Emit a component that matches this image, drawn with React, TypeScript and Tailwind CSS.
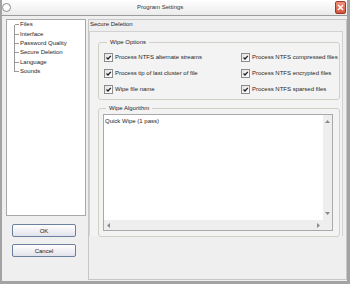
import React from 'react'

const TREE = ['Files', 'Interface', 'Password Quality', 'Secure Deletion', 'Language', 'Sounds']

const LEFT_OPTS = ['Process NTFS alternate streams', 'Process tip of last cluster of file', 'Wipe file name']
const RIGHT_OPTS = ['Process NTFS compressed files', 'Process NTFS encrypted files', 'Process NTFS sparsed files']

function Check({ label }: { label: string }) {
  return (
    <div className="flex items-center h-[16px]">
      <span className="w-[9px] h-[9px] border border-[#8c8c8c] bg-gradient-to-br from-[#e2e2e2] to-white flex items-center justify-center">
        <svg width="7" height="7" viewBox="0 0 7 7">
          <path d="M1.5 3.5 L3 5 L5.8 1.8" stroke="#1a1a1a" strokeWidth="1.2" fill="none" />
        </svg>
      </span>
      <span className="ml-[2px]">{label}</span>
    </div>
  )
}

function Arrow({ dir }: { dir: 'up' | 'down' | 'left' | 'right' }) {
  const d = {
    up: 'M0 3 L2.5 0 L5 3 Z',
    down: 'M0 0 L5 0 L2.5 3 Z',
    left: 'M3 0 L3 5 L0 2.5 Z',
    right: 'M0 0 L3 2.5 L0 5 Z',
  }[dir]
  const vertical = dir === 'up' || dir === 'down'
  return (
    <svg width={vertical ? 5 : 3} height={vertical ? 3 : 5} viewBox={vertical ? '0 0 5 3' : '0 0 3 5'}>
      <path d={d} fill="#8a8a8a" />
    </svg>
  )
}

function Btn({ label }: { label: string }) {
  return (
    <button className="w-[64px] h-[13px] ml-[6px] rounded-[2px] border border-[#6b7f9e] bg-gradient-to-b from-white to-[#e2e2ec] text-[#222] flex items-center justify-center leading-none">
      {label}
    </button>
  )
}

export default function App() {
  return (
    <div
      className="w-[350px] h-[284px] bg-[#efefef] border-l-2 border-r-[3px] border-b-[3px] border-[#a3a3a3] flex flex-col text-[6px] leading-[7px] text-[#1e1e1e]"
      style={{ fontFamily: '"Liberation Sans", Arial, sans-serif' }}
    >
      {/* title bar */}
      <div className="h-[16px] flex items-center border-b border-[#9c9c9c] bg-gradient-to-b from-white to-[#ebebeb]">
        <span className="w-[9px] h-[9px] rounded-full border border-[#8a8a8a] bg-white" />
        <span className="ml-[126px] text-[#333]">Program Settings</span>
        <span className="flex-1" />
        <span className="w-[11px] h-[13px] mr-[1px] rounded-[2px] border border-[#9c3a2a] bg-gradient-to-b from-[#f0907a] to-[#d4533a] flex items-center justify-center">
          <svg width="7" height="7" viewBox="0 0 7 7">
            <path d="M1 1 L6 6 M6 1 L1 6" stroke="white" strokeWidth="1.5" />
          </svg>
        </span>
      </div>

      <div className="flex-1 flex pl-[4px] pt-[3px]">
        {/* left column */}
        <div className="w-[80px] flex flex-col">
          <div className="h-[197px] border border-[#a9a9a9] bg-white flex">
            <div className="ml-[7px] mt-[5px] w-px h-[47px] bg-[#9a9a9a]" />
            <div className="flex flex-col">
              {TREE.map((t) => (
                <div key={t} className="h-[9.4px] flex items-center">
                  <span className="w-[4px] h-px bg-[#9a9a9a]" />
                  <span className="ml-[1px]">{t}</span>
                </div>
              ))}
            </div>
          </div>
          <div className="mt-[8px]">
            <Btn label="OK" />
          </div>
          <div className="mt-[7px]">
            <Btn label="Cancel" />
          </div>
        </div>

        {/* right page */}
        <div className="ml-[2px] w-[259px] h-[261px] border border-[#c6c6c6] flex flex-col">
          <div className="h-[11px] pl-[1px] pt-[1px]">Secure Deletion</div>
          <div className="w-[254px] h-[205px] border-t border-l border-r border-[#d2d2d2] bg-[#f3f3f3] flex flex-col pl-[8px]">
            <fieldset className="w-[242px] mt-[7px] border border-[#d0d0c8] rounded-[3px] pl-[5px] pb-[2px]">
              <legend className="ml-[3px] px-[3px]">Wipe Options</legend>
              <div className="grid grid-cols-[137px_1fr] pt-[3px]">
                <div className="flex flex-col">
                  {LEFT_OPTS.map((o) => (
                    <Check key={o} label={o} />
                  ))}
                </div>
                <div className="flex flex-col">
                  {RIGHT_OPTS.map((o) => (
                    <Check key={o} label={o} />
                  ))}
                </div>
              </div>
            </fieldset>
            <fieldset className="w-[242px] mt-[5px] border border-[#d0d0c8] rounded-[3px] pl-[4px] pb-[5px]">
              <legend className="ml-[3px] px-[3px]">Wipe Algorithm</legend>
              <div className="mt-[2px] w-[230px] h-[117px] border border-[#a9a9a9] bg-white grid grid-cols-[1fr_9px] grid-rows-[1fr_10px]">
                <div className="pl-[1px] pt-[3px]">Quick Wipe (1 pass)</div>
                <div className="bg-[#eeeeee] flex flex-col items-center justify-between py-[5px]">
                  <Arrow dir="up" />
                  <Arrow dir="down" />
                </div>
                <div className="bg-[#eeeeee] flex items-center justify-between px-[3px]">
                  <Arrow dir="left" />
                  <Arrow dir="right" />
                </div>
                <div className="bg-[#eeeeee]" />
              </div>
            </fieldset>
          </div>
        </div>
      </div>
    </div>
  )
}
